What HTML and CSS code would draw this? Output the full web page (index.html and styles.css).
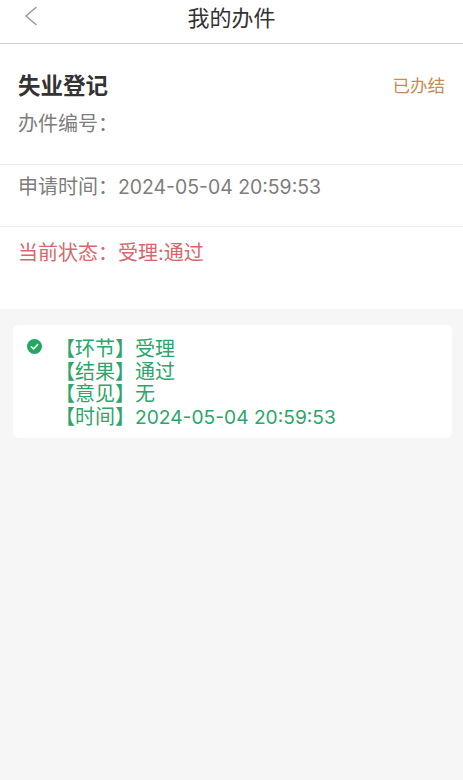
FILE: index.html
```html
<!DOCTYPE html>
<html lang="zh-CN">
<head>
<meta charset="utf-8">
<title>我的办件</title>
<link rel="stylesheet" href="styles.css">
</head>
<body>
<header class="nav">
  <span class="nav-back">
    <svg width="14" height="20" viewBox="0 0 14 20"><path d="M12 1.5 L2 10 L12 18.5" fill="none" stroke="#9a9a9a" stroke-width="1.6" stroke-linecap="round" stroke-linejoin="round"/></svg>
  </span>
  <h1 class="nav-title">我的办件</h1>
</header>
<section class="info">
  <div class="row row-head">
    <div class="title-line">
      <span class="title">失业登记</span>
      <span class="status-tag">已办结</span>
    </div>
    <div class="line gray">办件编号：</div>
  </div>
  <div class="row row-time">
    <div class="line gray">申请时间：<span class="num">2024-05-04 20:59:53</span></div>
  </div>
  <div class="row row-state">
    <div class="line red">当前状态：受理:通过</div>
  </div>
</section>
<section class="card">
  <span class="check">
    <svg width="15" height="15" viewBox="0 0 14 14"><circle cx="7" cy="7" r="7" fill="#23a862"/><path d="M4 7.2 L6.1 9.2 L10 5.2" fill="none" stroke="#fff" stroke-width="1.4" stroke-linecap="round" stroke-linejoin="round"/></svg>
  </span>
  <div class="steps">
    <div>【环节】受理</div>
    <div>【结果】通过</div>
    <div>【意见】无</div>
    <div>【时间】<span class="num">2024-05-04 20:59:53</span></div>
  </div>
</section>
</body>
</html>
```

FILE: styles.css
```css
* { box-sizing: border-box; }
html, body {
  margin: 0;
  padding: 0;
}
body {
  background: #f6f6f6;
  font-family: "Inter", "Noto Sans CJK SC", sans-serif;
  min-height: 780px;
}
.nav {
  height: 44px;
  background: #fff;
  border-bottom: 1px solid #d2d2d2;
  display: flex;
  justify-content: center;
  position: relative;
}
.nav-back {
  position: absolute;
  left: 24px;
  top: 6px;
  display: flex;
}
.nav-title {
  margin: 0;
  font-weight: 400;
  font-size: 22px;
  line-height: 32px;
  color: #333;
  font-family: "Noto Sans CJK SC", sans-serif;
}
.info {
  background: #fff;
}
.row {
  padding: 0 18px;
}
.row + .row {
  border-top: 1px solid #ededed;
}
.row-head {
  padding-top: 27px;
  padding-bottom: 27px;
}
.row-time {
  padding-top: 9px;
  padding-bottom: 26px;
}
.row-state {
  padding-top: 13px;
  padding-bottom: 43px;
}
.title-line {
  display: flex;
  justify-content: space-between;
  align-items: center;
  height: 26px;
  margin-bottom: 14px;
}
.title {
  font-family: "Noto Sans CJK SC", sans-serif;
  font-size: 22.5px;
  font-weight: 700;
  color: #333;
}
.status-tag {
  font-family: "Noto Sans CJK SC", sans-serif;
  font-size: 17.5px;
  color: #c98b57;
}
.line {
  font-size: 20px;
  line-height: 26px;
}
.num {
  font-size: 19.4px;
}
.gray { color: #7d7d7d; }
.red { color: #d8676d; }
.card {
  margin: 16px 11px 0 13px;
  background: #fff;
  border-radius: 6px;
  padding: 13px 14px 10px 14px;
  display: flex;
  gap: 13px;
}
.check {
  display: flex;
  padding-top: 1px;
}
.steps {
  color: #2ca66a;
  font-size: 20px;
  line-height: 22.5px;
}
.steps .num {
  font-size: 19.2px;
}
```
